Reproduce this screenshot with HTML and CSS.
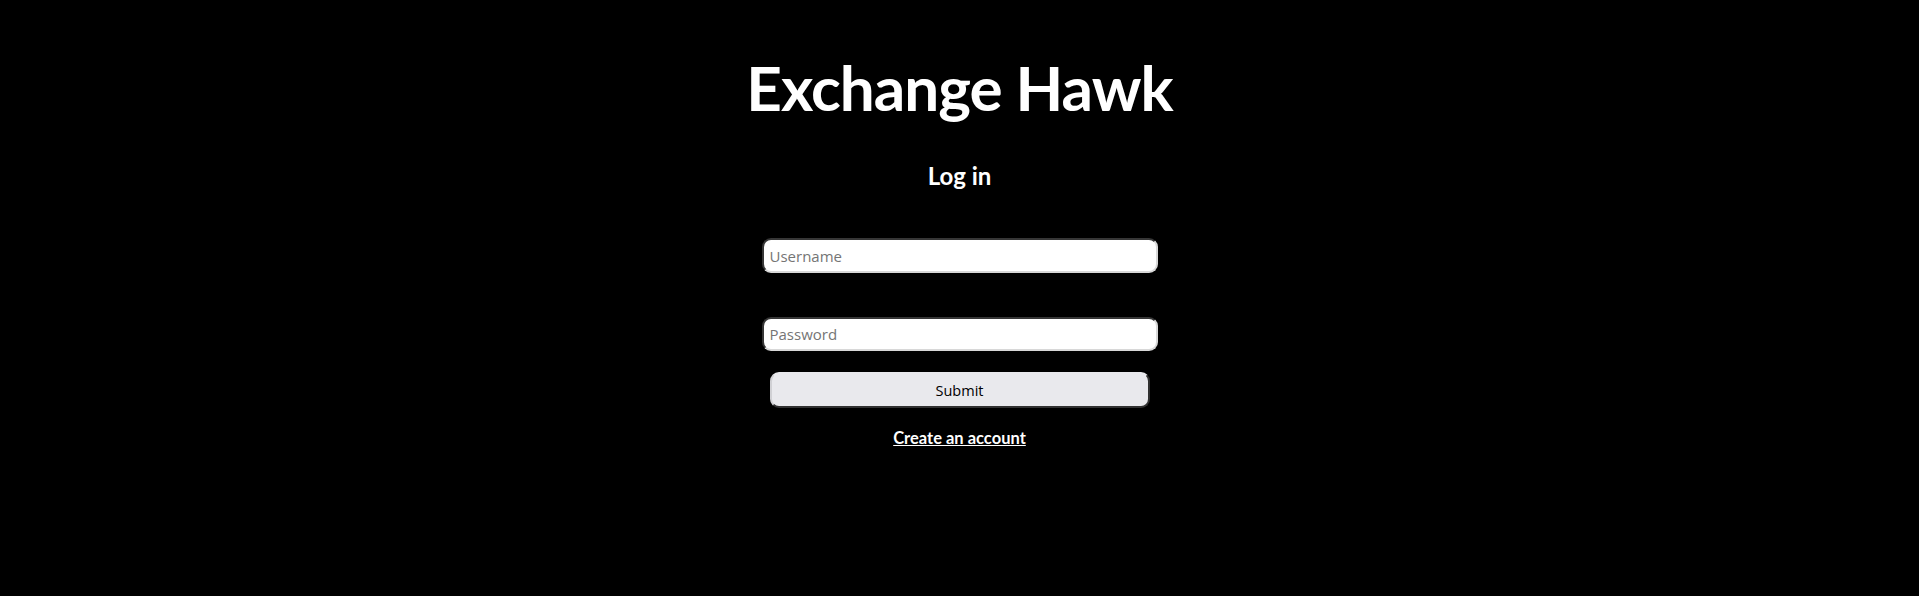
FILE: index.html
```html
<!DOCTYPE html>
<html>
<head>
<meta charset="utf-8">
<link rel="stylesheet" href="styles.css">
</head>
<body>
<main class="page">
  <h1 class="title">Exchange Hawk</h1>
  <h2 class="subtitle">Log in</h2>
  <form class="form">
    <input class="field" type="text" placeholder="Username">
    <input class="field field-pass" type="password" placeholder="Password">
    <button class="submit" type="button">Submit</button>
  </form>
  <a class="link" href="#">Create an account</a>
</main>
</body>
</html>
```
FILE: styles.css
```css
html, body {
  margin: 0;
  padding: 0;
  background: #000;
  height: 100%;
}
.page {
  display: flex;
  flex-direction: column;
  align-items: center;
  font-family: Lato, "Liberation Sans", sans-serif;
  color: #fff;
}
.title {
  margin: 50px 0 0;
  font-size: 62px;
  font-weight: 700;
  letter-spacing: -1px;
  line-height: 74px;
}
.subtitle {
  margin: 37px 0 0;
  font-size: 24px;
  font-weight: 700;
  line-height: 30px;
}
.form {
  display: flex;
  flex-direction: column;
  align-items: center;
  margin-top: 47px;
}
.field {
  box-sizing: border-box;
  width: 396px;
  height: 35px;
  border: 2px inset #a0a0a0;
  border-top-color: #8a8a8a;
  border-left-color: #8a8a8a;
  border-bottom-color: #d8d8d8;
  border-right-color: #d8d8d8;
  border-radius: 9px;
  padding: 0 6px;
  font-family: "Open Sans", sans-serif;
  font-size: 15px;
  background: #fff;
  color: #000;
}
.field::placeholder {
  color: #757575;
}
.field-pass {
  margin-top: 44px;
  height: 34px;
}
.submit {
  box-sizing: border-box;
  margin-top: 21px;
  width: 380px;
  height: 36px;
  background: #e9e9ed;
  border: 2px outset #c0c0c0;
  border-top-color: #e9e9ed;
  border-left-color: #d0d0d4;
  border-bottom-color: #858585;
  border-right-color: #858585;
  border-radius: 9px;
  font-family: "Open Sans", sans-serif;
  font-size: 14.5px;
  color: #000;
}
.link {
  margin-top: 20px;
  font-size: 16.5px;
  font-weight: 700;
  line-height: 20px;
  color: #fff;
  text-decoration: underline;
}
```
